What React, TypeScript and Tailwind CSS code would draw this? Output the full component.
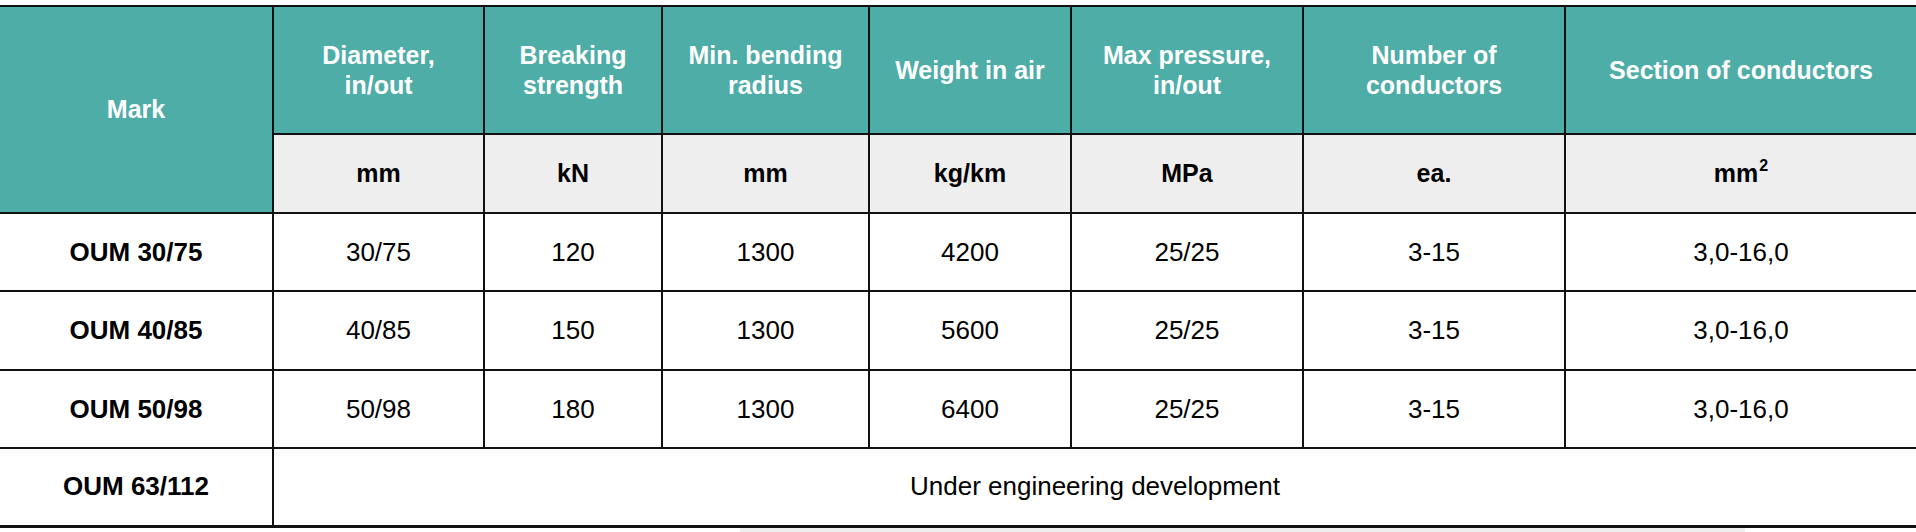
import React from 'react';

const rows = [
  { mark: 'OUM 30/75', values: ['30/75', '120', '1300', '4200', '25/25', '3-15', '3,0-16,0'] },
  { mark: 'OUM 40/85', values: ['40/85', '150', '1300', '5600', '25/25', '3-15', '3,0-16,0'] },
  { mark: 'OUM 50/98', values: ['50/98', '180', '1300', '6400', '25/25', '3-15', '3,0-16,0'] },
];

const rowHeights = ['h-[78px]', 'h-[79px]', 'h-[78px]'];

const headers = [
  ['Diameter,', 'in/out'],
  ['Breaking', 'strength'],
  ['Min. bending', 'radius'],
  ['Weight in air'],
  ['Max pressure,', 'in/out'],
  ['Number of', 'conductors'],
  ['Section of conductors'],
];

const units: React.ReactNode[] = [
  'mm',
  'kN',
  'mm',
  'kg/km',
  'MPa',
  'ea.',
  <>mm<sup className="text-[16px] relative -top-[11px] ml-[1px]">2</sup></>,
];

const cell = 'border-2 border-[#111] text-center align-middle p-0';

export default function App() {
  return (
    <div className="w-[1916px] h-[532px] bg-white overflow-hidden font-['Liberation_Sans',Arial,sans-serif] text-black">
      <table className="mt-[5px] w-full table-fixed border-collapse">
        <colgroup>
          <col className="w-[273px]" />
          <col className="w-[211px]" />
          <col className="w-[178px]" />
          <col className="w-[207px]" />
          <col className="w-[202px]" />
          <col className="w-[232px]" />
          <col className="w-[262px]" />
          <col className="w-[351px]" />
        </colgroup>
        <thead>
          <tr className="h-[128px] bg-[#4fada8] text-white">
            <th rowSpan={2} className={`${cell} border-l-0 text-[25px] font-bold`}>
              Mark
            </th>
            {headers.map((lines, i) => (
              <th
                key={i}
                className={`${cell} ${i === headers.length - 1 ? 'border-r-0' : ''} text-[25px] leading-[30px] font-bold`}
              >
                {lines.map((l) => (
                  <div key={l}>{l}</div>
                ))}
              </th>
            ))}
          </tr>
          <tr className="h-[79px] bg-[#eeeeee]">
            {units.map((u, i) => (
              <th
                key={i}
                className={`${cell} ${i === units.length - 1 ? 'border-r-0' : ''} text-[25px] font-bold`}
              >
                {u}
              </th>
            ))}
          </tr>
        </thead>
        <tbody className="text-[26px]">
          {rows.map((r, ri) => (
            <tr key={r.mark} className={rowHeights[ri]}>
              <td className={`${cell} border-l-0 font-bold`}>{r.mark}</td>
              {r.values.map((v, i) => (
                <td key={i} className={`${cell} ${i === r.values.length - 1 ? 'border-r-0' : ''}`}>
                  {v}
                </td>
              ))}
            </tr>
          ))}
          <tr className="h-[78px]">
            <td className={`${cell} border-l-0 border-b-[3px] font-bold`}>OUM 63/112</td>
            <td colSpan={7} className={`${cell} border-r-0 border-b-[3px]`}>
              Under engineering development
            </td>
          </tr>
        </tbody>
      </table>
      <div className="ml-[740px] w-[1005px] h-[6px] bg-[#eeeeee]" />
    </div>
  );
}
